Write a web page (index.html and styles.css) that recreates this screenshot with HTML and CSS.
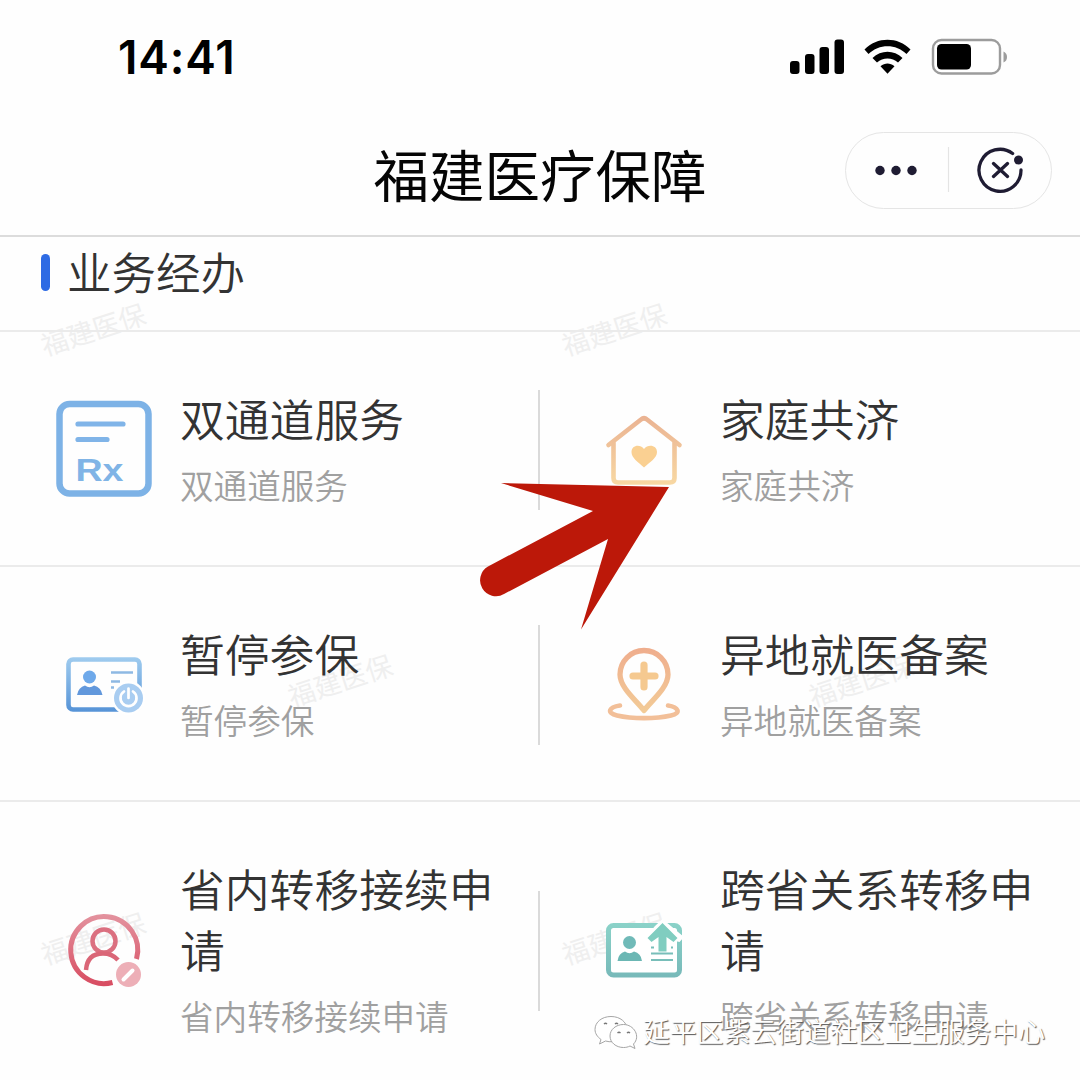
FILE: index.html
```html
<!DOCTYPE html>
<html lang="zh-CN">
<head>
<meta charset="utf-8">
<title>福建医疗保障</title>
<link rel="stylesheet" href="styles.css">
</head>
<body>
<div class="screen">
  <div class="marks">
    <span class="mark m1">福建医保</span><span class="mark m2">福建医保</span>
    <span class="mark m3">福建医保</span><span class="mark m4">福建医保</span>
    <span class="mark m5">福建医保</span><span class="mark m6">福建医保</span>
  </div>

  <header class="top">
    <div class="status">
      <span class="clock">14:41</span>
      <svg class="signals" width="220" height="40" viewBox="788 37 220 40">
        <rect x="790" y="61" width="9.500" height="13" rx="3"/>
        <rect x="805" y="54" width="9.500" height="20" rx="3"/>
        <rect x="819.500" y="47" width="9.500" height="27" rx="3"/>
        <rect x="834.500" y="39.500" width="9.500" height="34.500" rx="3"/>
        <path d="M864.500 49.500C877 36.500 898 36.500 910.500 49.500L906.500 54C896 43.500 879 43.500 868.500 54Z"/>
        <path d="M872.500 58C881 49.500 894 49.500 902.500 58L898 62.500C892 57 883 57 877 62.500Z"/>
        <path d="M880.500 66.300C885 62.500 890 62.500 894.500 66.300L887.500 73.800Z"/>
        <rect x="933" y="40" width="67" height="33.500" rx="8.500" fill="#fff" stroke="#9c9c9c" stroke-width="2.400"/>
        <rect x="937" y="44" width="34" height="25.500" rx="4.500"/>
        <path d="M1003.500 51.500Q1007 53 1007 57T1003.500 62.500Z" fill="#9c9c9c"/>
      </svg>
    </div>
    <div class="nav">
      <h1>福建医疗保障</h1>
      <div class="capsule">
        <svg width="206" height="76" viewBox="845 132 206 76">
          <g fill="#1f1c33"><circle cx="880" cy="170.500" r="4.700"/><circle cx="896" cy="170.500" r="4.700"/><circle cx="912" cy="170.500" r="4.700"/><circle cx="1018.500" cy="160" r="4.500"/></g>
          <path d="M948.500 147V192" stroke="#e4e4e4" stroke-width="1.200"/>
          <path d="M1012.600 153.500A21 21 0 1 0 1021 170M993.500 163.500L1007.500 176.500M1007.500 163.500L993.500 176.500" fill="none" stroke="#1f1c33" stroke-width="3.300" stroke-linecap="round"/>
        </svg>
      </div>
    </div>
  </header>

  <h2 class="section">业务经办</h2>

  <main>
    <div class="row">
      <div class="item">
        <svg class="icon" viewBox="40 390 128 120">
          <rect x="59.500" y="404" width="89" height="89.500" rx="10" fill="none" stroke="#7db2e6" stroke-width="6.500"/>
          <path d="M78 424H123M78 439.500H107" stroke="#80b4e8" stroke-width="5.200" stroke-linecap="round"/>
          <text class="rx" x="75.500" y="480.500" textLength="48" lengthAdjust="spacingAndGlyphs">Rx</text>
        </svg>
        <div class="text"><h3>双通道服务</h3><p>双通道服务</p></div>
      </div>
      <div class="item">
        <svg class="icon" viewBox="580 390 128 120">
          <defs><linearGradient id="house" x1="0" y1="415" x2="0" y2="487" gradientUnits="userSpaceOnUse"><stop stop-color="#eab292"/><stop offset="1" stop-color="#f8d9a3"/></linearGradient></defs>
          <path d="M613.500 442V478Q613.500 482.500 618 482.500H670Q674.500 482.500 674.500 478V442M608.500 445L641 419.500Q644 417 647 419.500L679.500 445" fill="none" stroke="url(#house)" stroke-width="4.600" stroke-linecap="round" stroke-linejoin="round"/>
          <path d="M644 467.500C638 462 631.500 458 631.500 452C631.500 445 640 443.500 644 449C648 443.500 657 445 657 452C657 458 650 462 644 467.500Z" fill="#fad092"/>
        </svg>
        <div class="text"><h3>家庭共济</h3><p>家庭共济</p></div>
      </div>
    </div>

    <div class="row">
      <div class="item">
        <svg class="icon" viewBox="40 625 128 120">
          <defs><linearGradient id="card" x1="0" y1="657" x2="0" y2="711" gradientUnits="userSpaceOnUse"><stop stop-color="#a0ccef"/><stop offset="1" stop-color="#5794d7"/></linearGradient></defs>
          <rect x="68.500" y="659.500" width="71" height="50" rx="4.500" fill="none" stroke="url(#card)" stroke-width="4.600"/>
          <circle cx="89.500" cy="677" r="6.500" fill="#6ea9ea"/>
          <path d="M77 695Q78.500 687 85 685.500Q89.500 689 94 685.500Q101 687 102.500 695Z" fill="#6298dc"/>
          <path d="M111 672.500H133M111 681.500H120M111 687.500H114" stroke="#8eb9e3" stroke-width="2.500"/>
          <circle cx="128.500" cy="698" r="17" fill="#fff"/><circle cx="128.500" cy="698" r="14.500" fill="#a9cdf1"/>
          <path d="M124 691.500A8 8 0 1 0 133 691.500M128.500 688.500V698" fill="none" stroke="#fff" stroke-width="2.700" stroke-linecap="round"/>
        </svg>
        <div class="text"><h3>暂停参保</h3><p>暂停参保</p></div>
      </div>
      <div class="item">
        <svg class="icon" viewBox="580 625 128 120">
          <defs><linearGradient id="pin" x1="0" y1="648" x2="0" y2="720" gradientUnits="userSpaceOnUse"><stop stop-color="#efad8d"/><stop offset="1" stop-color="#f3cf98"/></linearGradient></defs>
          <path d="M644 710.500C637 701 620 688 620 674.500A24 24 0 0 1 668 674.500C668 688 651 701 644 710.500Z" fill="none" stroke="url(#pin)" stroke-width="5.300" stroke-linejoin="round"/>
          <path d="M620 705.500C609 707 606 713 617 715.500C632 719 656 719 671 715.500C682 713 678 707 668 705.500" fill="none" stroke="#f2bf98" stroke-width="4.600" stroke-linecap="round"/>
          <path d="M644 665V687M633 676H655" stroke="#f5c990" stroke-width="7.200" stroke-linecap="round"/>
        </svg>
        <div class="text"><h3>异地就医备案</h3><p>异地就医备案</p></div>
      </div>
    </div>

    <div class="row">
      <div class="item">
        <svg class="icon" viewBox="40 891 128 120">
          <defs><linearGradient id="user" x1="0" y1="915" x2="0" y2="985" gradientUnits="userSpaceOnUse"><stop stop-color="#e3929e"/><stop offset="1" stop-color="#d84d62"/></linearGradient></defs>
          <path d="M136.500 959A33.500 33.500 0 1 0 112.500 982.500" fill="none" stroke="url(#user)" stroke-width="5"/>
          <circle cx="104" cy="941" r="11.500" fill="none" stroke="#db7080" stroke-width="4.500"/>
          <path d="M86 970C87 957 95 953.500 103 953.500C109 953.500 114 955.500 118 960" fill="none" stroke="#da6677" stroke-width="4.500"/>
          <circle cx="128.500" cy="974.500" r="12.500" fill="#edafb7"/>
          <path d="M123.500 979.500L132.500 970.500" stroke="#fff" stroke-width="4" stroke-linecap="round"/>
        </svg>
        <div class="text"><h3>省内转移接续申请</h3><p>省内转移接续申请</p></div>
      </div>
      <div class="item">
        <svg class="icon" viewBox="580 891 128 120">
          <defs><linearGradient id="move" x1="0" y1="922" x2="0" y2="978" gradientUnits="userSpaceOnUse"><stop stop-color="#8bd3c9"/><stop offset="1" stop-color="#77b9b9"/></linearGradient></defs>
          <rect x="608.500" y="925.500" width="71" height="49.500" rx="5" fill="#fff" stroke="url(#move)" stroke-width="5"/>
          <circle cx="629.500" cy="942.500" r="6.500" fill="#70bab8"/>
          <path d="M617.500 961Q618.500 953 625 951.500Q629.500 955 634 951.500Q641 953 642 961Z" fill="#6bb7b4"/>
          <path d="M651 947.500H673M651 953.500H673M651 960H673" stroke="#78beb9" stroke-width="2.200"/>
          <path d="M655 926L662.500 919L684 937L679.500 942L671 940V952H654V940L649 933Z" fill="#fff"/>
          <path d="M662.500 923L677.500 938L673.500 942L666.500 937V951.500H658.500V937L651.500 942L647.500 938Z" fill="#80cdc0"/>
        </svg>
        <div class="text"><h3>跨省关系转移申请</h3><p>跨省关系转移申请</p></div>
      </div>
    </div>
  </main>

  <svg class="pointer" width="200" height="160" viewBox="475 475 200 160">
    <path d="M501 483L669 487L581 629.500L608 539L504 594A15.800 15.800 0 0 1 488 566.500L593 511Z" fill="#bc1809"/>
  </svg>

  <div class="account">
    <svg width="46" height="40" viewBox="592 1012 46 40">
      <g fill="#fff" stroke="#a5a5a5" stroke-width="1">
        <path d="M611 1016.500C602 1016.500 595 1022 595 1029.500C595 1033.500 597.500 1037 601 1039.500L599.500 1044L605.500 1041C615 1044 627 1038 627 1029.500C627 1022 620 1016.500 611 1016.500Z"/>
        <path d="M623.500 1024.500C616 1024.500 610 1029.500 610 1036C610 1042.500 616 1047.500 623.500 1047.500C626 1047.500 628 1047 630 1046L635 1048.500L633.500 1044C641 1036.500 634 1024.500 623.500 1024.500Z"/>
      </g>
      <path d="M604 1024Q605.500 1022.500 607 1024M615 1024Q616.500 1022.500 618 1024M617.500 1033Q619 1031.500 620.500 1033M627 1033Q628.500 1031.500 630 1033" fill="none" stroke="#777" stroke-width="1.300"/>
    </svg>
    <span>延平区紫云街道社区卫生服务中心</span>
  </div>
</div>
</body>
</html>
```
FILE: styles.css
```css
* { box-sizing: border-box; margin: 0; padding: 0; }
body { background: #fefefe; font-family: "Noto Sans CJK SC", sans-serif; }
h1, h2, h3, p { font-weight: 400; }
.screen { position: relative; width: 1080px; height: 1080px; overflow: hidden; isolation: isolate; }

.top { height: 237px; border-bottom: 2px solid #dcdcdc; }
.status { height: 114px; padding: 0 72px 0 118px; display: flex; align-items: center; justify-content: space-between; }
.clock { font: 600 46px/60px Inter, sans-serif; letter-spacing: 0.8px; }
.signals { display: block; }
.nav { display: grid; grid-template-columns: 1fr auto 1fr; padding: 18px 28px 0; }
.nav h1 { grid-column: 2; font-size: 55.5px; line-height: 82px; color: #050505; }
.capsule { justify-self: end; width: 207px; height: 77px; border: 1px solid #e5e5e5; border-radius: 39px; }
.capsule svg { display: block; margin: -1px; }

.section { display: flex; align-items: center; gap: 17px; height: 93px; padding: 0 0 27px 41px; font-size: 44.5px; font-weight: 350; color: #333; }
.section::before { content: ""; width: 9px; height: 37px; margin-top: 4px; border-radius: 5px; background: #2e6be4; }

.row { display: grid; grid-template-columns: 540px 540px; padding: 58px 0 55px; border-top: 2px solid #ebebeb; }
.item { display: flex; align-items: center; gap: 12px; padding: 0 30px 0 40px; min-height: 120px; }
.item:first-child { background: linear-gradient(#dadada, #dadada) right center / 2px 120px no-repeat; }
.icon { flex: none; width: 128px; height: 120px; }
.text { display: grid; gap: 14px; width: 320px; transform: translateY(-3px); }
.text h3 { font-size: 44.8px; line-height: 61px; font-weight: 350; color: #333; }
.text p { font-size: 33.6px; line-height: 45px; font-weight: 350; color: #a0a0a0; }
.rx { font: 700 32px "Liberation Sans", sans-serif; fill: #80b4e6; }

.mark { position: absolute; z-index: -1; font-size: 27px; line-height: 32px; font-weight: 400; color: #efefef; transform: translate(-50%, -50%) rotate(-18deg); white-space: nowrap; }
.m1 { left: 93px; top: 329px; }
.m2 { left: 614px; top: 329px; }
.m3 { left: 340px; top: 680px; }
.m4 { left: 861px; top: 680px; }
.m5 { left: 93px; top: 938px; }
.m6 { left: 614px; top: 938px; }

.pointer { position: absolute; left: 475px; top: 475px; }
.account { position: absolute; left: 592px; top: 1012px; display: flex; align-items: center; gap: 5px; height: 40px; font-size: 26.8px; line-height: 40px; font-weight: 350; color: #fff; text-shadow: 1px 1px 1px #555; white-space: nowrap; }
.account span { margin-top: -3px; }
```
